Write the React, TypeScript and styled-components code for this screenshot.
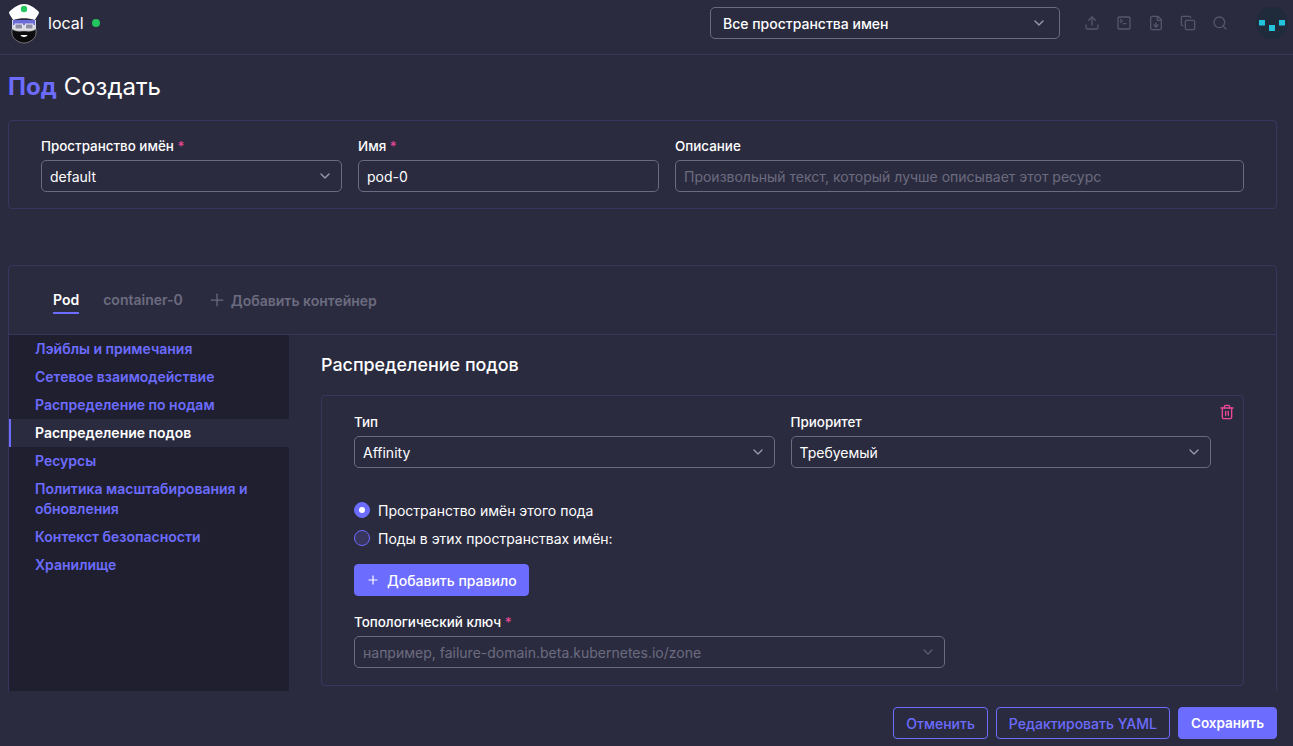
import styled, { createGlobalStyle } from "styled-components";
import {
  ChevronDown,
  Copy,
  FileDown,
  Plus,
  Search,
  SquareTerminal,
  Trash2,
  Upload,
} from "lucide-react";

const GlobalStyle = createGlobalStyle`
  * { box-sizing: border-box; }
  html, body, #root { height: 100%; }
  body {
    margin: 0;
    overflow: hidden;
    background: #2b2b40;
    color: #fff;
    font-family: Inter, "Noto Sans", sans-serif;
  }
`;

const Page = styled.div`
  height: 100vh;
  display: flex;
  flex-direction: column;
`;

const Header = styled.header`
  flex: none;
  height: 55px;
  display: flex;
  align-items: center;
  padding: 0 5px 8px 8px;
  border-bottom: 1px solid #38365f;
`;

const ClusterName = styled.span`
  margin-left: 8px;
  font-size: 16px;
  line-height: 20px;
`;

const StatusDot = styled.span`
  width: 8px;
  height: 8px;
  margin-left: 8px;
  border-radius: 50%;
  background: #22c55e;
`;

const HeaderRight = styled.div`
  margin-left: auto;
  display: flex;
  align-items: center;
`;

const Toolbar = styled.div`
  display: flex;
  align-items: center;
  gap: 16px;
  margin-left: 24px;
  color: #55556b;
`;

const Avatar = styled.div`
  width: 32px;
  height: 32px;
  margin-left: 28px;
`;

const Main = styled.main`
  flex: 1;
  min-height: 0;
  overflow: hidden;
  padding: 0 16px 0 8px;
`;

const TitleRow = styled.h1`
  margin: 0;
  height: 65px;
  padding-bottom: 2px;
  display: flex;
  align-items: center;
  gap: 7px;
  font-size: 24px;
  line-height: 32px;
  font-weight: 400;
`;

const TitleLink = styled.span`
  color: #6c6cff;
  font-weight: 700;
`;

const Panel = styled.section`
  border: 1px solid #38365f;
  border-radius: 4px;
`;

const MetaPanel = styled(Panel)`
  height: 89px;
  padding: 15px 32px 0;
  display: grid;
  grid-template-columns: 301px 301px 1fr;
  column-gap: 16px;
  margin-bottom: 56px;
`;

const Field = styled.div<{ $width?: number }>`
  width: ${(p) => (p.$width ? `${p.$width}px` : "auto")};
  min-width: 0;
`;

const Label = styled.label`
  display: block;
  height: 24px;
  font-size: 13.4px;
  line-height: 20px;
  font-weight: 500;
`;

const Required = styled.span`
  color: #ec4899;
`;

const Control = styled.div<{ $muted?: boolean }>`
  height: 32px;
  display: flex;
  align-items: center;
  justify-content: space-between;
  padding: 0 8px;
  border: 1px solid #6b6b7f;
  border-radius: 5px;
  font-size: 14px;
  color: ${(p) => (p.$muted ? "#6b6b7f" : "#fff")};
  svg {
    color: ${(p) => (p.$muted ? "#5c5c70" : "#9a9aaa")};
    flex: none;
  }
`;

const NamespaceSelect = styled(Control)`
  width: 350px;
  padding: 0 12px;
  font-weight: 500;
`;

const FormPanel = styled(Panel)``;

const Tabs = styled.nav`
  height: 69px;
  display: flex;
  align-items: center;
  padding: 0 44px;
  border-bottom: 1px solid #38365f;
  font-size: 14px;
  font-weight: 600;
`;

const Tab = styled.span<{ $active?: boolean }>`
  height: 28px;
  line-height: 28px;
  margin-right: 24px;
  color: ${(p) => (p.$active ? "#fff" : "#6b6b7f")};
  border-bottom: 2px solid ${(p) => (p.$active ? "#6c6cff" : "transparent")};
`;

const AddTab = styled.span`
  display: flex;
  align-items: center;
  gap: 4px;
  color: #6b6b7f;
`;

const FormBody = styled.div`
  display: flex;
`;

const Sidebar = styled.aside`
  flex: none;
  width: 280px;
  min-height: 360px;
  background: #1f1f30;
`;

const SideItem = styled.div<{ $active?: boolean }>`
  padding: 4px 24px 4px ${(p) => (p.$active ? "24px" : "26px")};
  font-size: 14px;
  line-height: 20px;
  font-weight: 600;
  color: ${(p) => (p.$active ? "#fff" : "#6c6cff")};
  background: ${(p) => (p.$active ? "#2b2b40" : "transparent")};
  border-left: ${(p) => (p.$active ? "2px solid #6c6cff" : "none")};
`;

const Content = styled.div`
  flex: 1;
  min-width: 0;
  padding: 16px 32px 0;
`;

const SectionTitle = styled.h2`
  margin: 0 0 16px;
  font-size: 17.9px;
  line-height: 28px;
  font-weight: 500;
`;

const RuleCard = styled.div`
  position: relative;
  height: 291px;
  padding: 16px 32px 0;
  border: 1px solid #38365f;
  border-radius: 4px;
`;

const DeleteButton = styled.span`
  position: absolute;
  top: 8px;
  right: 8px;
  color: #ec4899;
  line-height: 0;
`;

const TwoColumns = styled.div`
  display: grid;
  grid-template-columns: 1fr 1fr;
  column-gap: 16px;
  margin-bottom: 28px;
`;

const RadioRow = styled.div`
  height: 28px;
  display: flex;
  align-items: center;
  gap: 8px;
  font-size: 14px;
`;

const Radio = styled.span<{ $checked?: boolean }>`
  width: 16px;
  height: 16px;
  border-radius: 50%;
  border: 1px solid #6c6cff;
  background: ${(p) => (p.$checked ? "#6c6cff" : "#38365f")};
  display: flex;
  align-items: center;
  justify-content: center;
  &::after {
    content: "";
    display: ${(p) => (p.$checked ? "block" : "none")};
    width: 6px;
    height: 6px;
    border-radius: 50%;
    background: #fff;
  }
`;

const Button = styled.button<{ $outline?: boolean }>`
  height: 32px;
  padding: 0 12px;
  display: inline-flex;
  align-items: center;
  gap: 6px;
  border-radius: 4px;
  border: 1px solid #6c6cff;
  background: ${(p) => (p.$outline ? "transparent" : "#6c6cff")};
  color: ${(p) => (p.$outline ? "#6c6cff" : "#fff")};
  font-family: inherit;
  font-size: 14px;
  font-weight: 500;
`;

const SaveButton = styled(Button)`
  font-size: 13.5px;
  font-weight: 600;
`;

const AddRule = styled(Button)`
  padding: 0 11px;
  gap: 7px;
  margin: 12px 0 16px;
`;

const Footer = styled.footer`
  flex: none;
  height: 55px;
  display: flex;
  justify-content: flex-end;
  align-items: flex-start;
  gap: 8px;
  padding: 16px 16px 0;
`;

function Logo() {
  return (
    <svg width="32" height="42" viewBox="0 0 32 42" fill="none">
      <path d="M4 18 H28 V30 H4 Z" fill="#d8d8e4" />
      <path d="M5 18 H27 V23 H5 Z" fill="#6c6cd8" />
      <path d="M1 10 C6 5 11 2 16 2 C21 2 26 5 31 10 C31 13 28 15 27 18 C20 15.5 12 15.5 5 18 C4 15 1 13 1 10 Z" fill="#fff" />
      <circle cx="16" cy="7" r="3.2" fill="#22c55e" />
      <rect x="7" y="22" width="7.5" height="5" stroke="#e8e8ee" fill="#8d8da6" />
      <rect x="17.5" y="22" width="7.5" height="5" stroke="#e8e8ee" fill="#8d8da6" />
      <path d="M4 27 C8 30 12 29 16 29 C20 29 24 30 28 27 V31 C28 37 21 41 16 41 C11 41 4 37 4 31 Z" fill="#0c0c0f" stroke="#aaa" strokeWidth="0.6" />
      <path d="M12.5 33 H19.5 C19 35.5 13 35.5 12.5 33 Z" fill="#fff" />
    </svg>
  );
}

function AvatarIcon() {
  return (
    <svg width="32" height="32" viewBox="0 0 32 32">
      <circle cx="16" cy="16" r="16" fill="#1f2a3a" />
      <rect x="3" y="13" width="6" height="5.5" fill="#22c3dc" />
      <rect x="13" y="18" width="6" height="6" fill="#22c3dc" />
      <rect x="23" y="13" width="6" height="5.5" fill="#22c3dc" />
    </svg>
  );
}

const sections = [
  "Лэйблы и примечания",
  "Сетевое взаимодействие",
  "Распределение по нодам",
  "Распределение подов",
  "Ресурсы",
  "Политика масштабирования и обновления",
  "Контекст безопасности",
  "Хранилище",
];

export default function App() {
  return (
    <Page>
      <GlobalStyle />
      <Header>
        <Logo />
        <ClusterName>local</ClusterName>
        <StatusDot />
        <HeaderRight>
          <NamespaceSelect>
            Все пространства имен
            <ChevronDown size={16} />
          </NamespaceSelect>
          <Toolbar>
            <Upload size={16} />
            <SquareTerminal size={16} />
            <FileDown size={16} />
            <Copy size={16} />
            <Search size={16} />
          </Toolbar>
          <Avatar>
            <AvatarIcon />
          </Avatar>
        </HeaderRight>
      </Header>
      <Main>
        <TitleRow>
          <TitleLink>Под</TitleLink> Создать
        </TitleRow>
        <MetaPanel>
          <Field>
            <Label>
              Пространство имён <Required>*</Required>
            </Label>
            <Control>
              default
              <ChevronDown size={16} />
            </Control>
          </Field>
          <Field>
            <Label>
              Имя <Required>*</Required>
            </Label>
            <Control>pod-0</Control>
          </Field>
          <Field>
            <Label>Описание</Label>
            <Control $muted>Произвольный текст, который лучше описывает этот ресурс</Control>
          </Field>
        </MetaPanel>
        <FormPanel>
          <Tabs>
            <Tab $active>Pod</Tab>
            <Tab>container-0</Tab>
            <AddTab>
              <Plus size={20} strokeWidth={1.5} />
              Добавить контейнер
            </AddTab>
          </Tabs>
          <FormBody>
            <Sidebar>
              {sections.map((s) => (
                <SideItem key={s} $active={s === "Распределение подов"}>
                  {s}
                </SideItem>
              ))}
            </Sidebar>
            <Content>
              <SectionTitle>Распределение подов</SectionTitle>
              <RuleCard>
                <DeleteButton>
                  <Trash2 size={16} />
                </DeleteButton>
                <TwoColumns>
                  <Field>
                    <Label>Тип</Label>
                    <Control>
                      Affinity
                      <ChevronDown size={16} />
                    </Control>
                  </Field>
                  <Field>
                    <Label>Приоритет</Label>
                    <Control>
                      Требуемый
                      <ChevronDown size={16} />
                    </Control>
                  </Field>
                </TwoColumns>
                <RadioRow>
                  <Radio $checked />
                  Пространство имён этого пода
                </RadioRow>
                <RadioRow>
                  <Radio />
                  Поды в этих пространствах имён:
                </RadioRow>
                <AddRule>
                  <Plus size={14} />
                  Добавить правило
                </AddRule>
                <Field $width={591}>
                  <Label>
                    Топологический ключ <Required>*</Required>
                  </Label>
                  <Control $muted>
                    например, failure-domain.beta.kubernetes.io/zone
                    <ChevronDown size={16} />
                  </Control>
                </Field>
              </RuleCard>
            </Content>
          </FormBody>
        </FormPanel>
      </Main>
      <Footer>
        <Button $outline>Отменить</Button>
        <Button $outline>Редактировать YAML</Button>
        <SaveButton>Сохранить</SaveButton>
      </Footer>
    </Page>
  );
}
